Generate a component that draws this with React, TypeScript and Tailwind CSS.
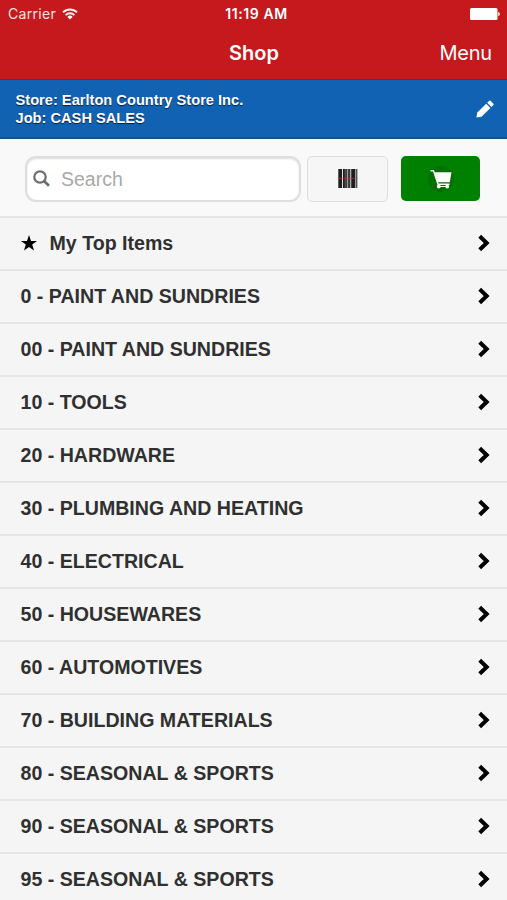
const categories = [
  "0 - PAINT AND SUNDRIES",
  "00 - PAINT AND SUNDRIES",
  "10 - TOOLS",
  "20 - HARDWARE",
  "30 - PLUMBING AND HEATING",
  "40 - ELECTRICAL",
  "50 - HOUSEWARES",
  "60 - AUTOMOTIVES",
  "70 - BUILDING MATERIALS",
  "80 - SEASONAL & SPORTS",
  "90 - SEASONAL & SPORTS",
  "95 - SEASONAL & SPORTS",
];

const WifiIcon = () => (
  <svg className="h-[12px] w-[16px]" viewBox="0 0 16 12" fill="none" stroke="#ffeeec" strokeWidth="1.9">
    <path d="M1 4.4a10 10 0 0 1 14 0" />
    <path d="M3.6 7.1a6.2 6.2 0 0 1 8.8 0" />
    <path d="M8 11.6 5.4 8.9a3.7 3.7 0 0 1 5.2 0Z" fill="#fff" stroke="none" />
  </svg>
);

const BatteryIcon = () => (
  <svg className="h-[12px] w-[30px]" viewBox="0 0 30 12">
    <rect x="0" y="0" width="27.5" height="12" rx="1.5" fill="#fff" />
    <path d="M28 4v4c1.4-.4 2-1.1 2-2s-.6-1.6-2-2Z" fill="#f8d9b0" />
  </svg>
);

const PencilIcon = () => (
  <svg className="h-[18px] w-[18px]" viewBox="0 0 18 18" fill="#fff">
    <path d="M.4 17.6 1.3 12.6 10.2 3.7l4.2 4.2-8.9 8.9Z" />
    <path d="m11.2 2.8 1.8-1.8q.9-.9 1.800 0l2.400 2.400q.9.9 0 1.800l-1.800 1.800Z" />
  </svg>
);

const SearchIcon = () => (
  <svg className="h-[17px] w-[17px] shrink-0" viewBox="0 0 17 17" fill="none" stroke="#6e6e6e">
    <circle cx="7" cy="7" r="5.7" strokeWidth="2.3" />
    <path d="m11 11 5 4.8" strokeWidth="2.7" />
  </svg>
);

const BarcodeIcon = () => (
  <svg className="h-[19px] w-[20px]" viewBox="0 0 20 19">
    <g fill="#1e1e1e">
      <rect x="0.3" width="3.7" height="19" />
      <rect x="4.9" width="2" height="19" />
      <rect x="7.1" width="2" height="19" fill="#3c3c3c" />
      <rect x="9.6" width="2.8" height="19" fill="#3c3c3c" />
      <rect x="13.2" width="4" height="19" />
      <rect x="17.6" width="1.8" height="19" fill="#555" />
    </g>
    <rect y="9" width="19.5" height="1" fill="#d33" opacity="0.5" />
  </svg>
);

const CartIcon = () => (
  <svg className="h-[28px] w-[28px]" viewBox="0 0 28 28">
    <circle cx="14" cy="14" r="13" fill="#007000" />
    <path d="M3.5 5.8H6.5L11 19.2H22.5" fill="none" stroke="#fff" strokeWidth="1.4" />
    <path d="M7.2 7.2H24.5L22.8 17.2H10.6Z" fill="#fff" />
    <path d="M12 21.500H20" stroke="#fff" strokeWidth="1" />
    <circle cx="11.800" cy="21.500" r="1.900" fill="#fff" />
    <circle cx="20.300" cy="21.500" r="1.900" fill="#fff" />
  </svg>
);

const StarIcon = () => (
  <svg className="h-[16px] w-[16px]" viewBox="0 0 16 16">
    <path d="m8 0 2 5.9 6 .1-4.8 3.6 1.8 6L8 12.1 3 15.6l1.800-6L0 6l6-.1Z" />
  </svg>
);

const ChevronIcon = () => (
  <svg className="h-[18px] w-[12px]" viewBox="0 0 12 18" fill="none" stroke="#000" strokeWidth="4">
    <path d="M1.7 2.2 8.7 9l-7 6.8" />
  </svg>
);

const Row = ({ label, starred = false }: { label: string; starred?: boolean }) => (
  <li className="flex h-[53px] items-center border-t-2 border-[#e5e5e5] pr-[17px] pb-[2px] pl-[20.5px]">
    {starred && (
      <span className="mr-[13px]">
        <StarIcon />
      </span>
    )}
    <span className="flex-1 whitespace-nowrap text-[19.6px] leading-6 font-bold text-[#303030]">{label}</span>
    <ChevronIcon />
  </li>
);

export default function App() {
  return (
    <div className="flex h-[900px] w-[507px] flex-col overflow-hidden bg-[#f5f5f5] font-['Liberation_Sans',Arial,sans-serif]">
      <header className="h-20 shrink-0 border-b border-[#57303f] bg-[#c6191e] font-[Inter,sans-serif] text-white">
        <div className="grid h-[27px] grid-cols-3 items-center pr-[7px] pl-[8px]">
          <div className="flex items-center gap-[6px] text-[14px] text-[#ffe3e0]">
            <span className="tracking-[0.3px]">Carrier</span>
            <WifiIcon />
          </div>
          <span className="pl-[5px] text-center text-[14px] font-semibold tracking-[0.6px]">11:19 AM</span>
          <div className="flex justify-end">
            <BatteryIcon />
          </div>
        </div>
        <div className="grid h-[51px] grid-cols-3 items-center pr-[15px] pl-4">
          <span />
          <h1 className="text-center text-[20px] font-semibold">Shop</h1>
          <button className="text-right text-[20px] tracking-[-0.2px]">Menu</button>
        </div>
      </header>

      <section className="flex h-[59px] shrink-0 items-center justify-between border-b-2 border-[#244f7d] bg-[#1262b3] pr-[13px] pl-[15.5px] text-white">
        <div className="text-[14.65px] leading-[18px] font-bold [text-shadow:0_1px_1px_#000a]">
          <p>Store: Earlton Country Store Inc.</p>
          <p>Job: CASH SALES</p>
        </div>
        <PencilIcon />
      </section>

      <section className="flex h-[77px] shrink-0 items-center bg-[#f9f9f9] pt-[2px] pl-[25px]">
        <label className="flex h-[46px] w-[276px] items-center gap-[11px] rounded-[11px] border-2 border-[#dedede] bg-white pl-[6px] shadow-[inset_0_1px_2px_#0002]">
          <SearchIcon />
          <input
            placeholder="Search"
            className="w-full min-w-0 bg-transparent pt-[2px] text-[19.5px] outline-none placeholder:text-[#a9a9a9]"
          />
        </label>
        <button className="ml-[6px] flex h-[46px] w-[81px] items-center justify-center rounded-[5px] border border-[#dddddd] bg-[#f6f6f6]">
          <BarcodeIcon />
        </button>
        <button className="ml-[13px] flex h-[45px] w-[79px] items-center justify-center rounded-[5px] bg-[#008000]">
          <CartIcon />
        </button>
      </section>

      <ul>
        <Row label="My Top Items" starred />
        {categories.map((label) => (
          <Row key={label} label={label} />
        ))}
      </ul>
    </div>
  );
}
